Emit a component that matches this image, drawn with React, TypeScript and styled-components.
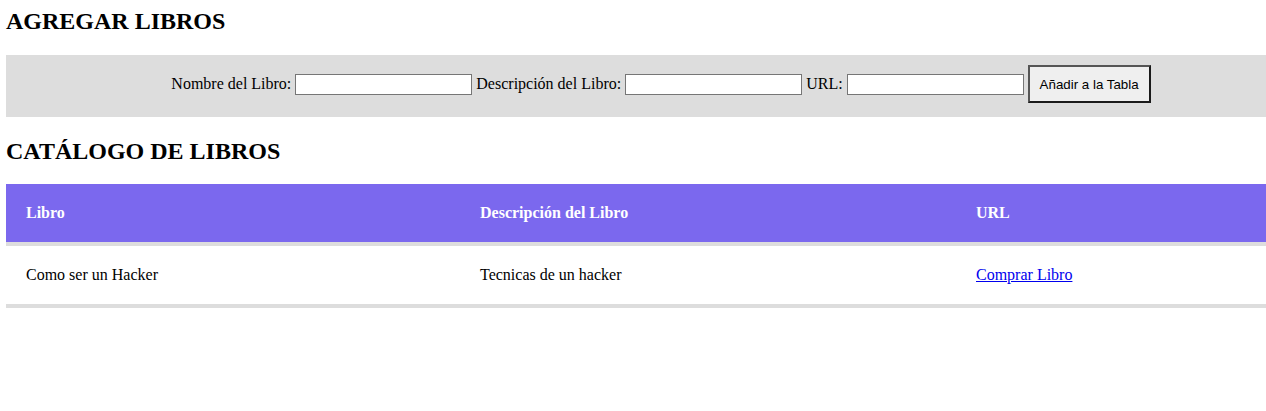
import styled, { createGlobalStyle } from 'styled-components';

const GlobalStyle = createGlobalStyle`
  html, body {
    margin: 0;
    padding: 0;
    background: #ffffff;
  }

  body {
    font-family: "Liberation Serif", "Times New Roman", serif;
    font-size: 16px;
    color: #000000;
  }
`;

const Page = styled.main`
  padding: 7px 0 0 6px;
`;

const Title = styled.h2`
  margin: 0 0 20px;
  font-size: 24px;
  font-weight: bold;
  line-height: 28px;
`;

const SecondTitle = styled(Title)`
  margin-top: 20px;
  margin-bottom: 19px;
`;

const AddForm = styled.form`
  display: flex;
  align-items: center;
  justify-content: center;
  gap: 4px;
  padding: 10px 0 14px 50px;
  background: #dddddd;
`;

const Label = styled.label`
  white-space: nowrap;
`;

const TextInput = styled.input`
  box-sizing: border-box;
  width: 177px;
  height: 21px;
  padding: 1px 2px;
  border: 1px solid #767676;
  background: #ffffff;
  font-family: "Liberation Sans", Arial, sans-serif;
  font-size: 13.33px;
`;

const AddButton = styled.button`
  box-sizing: border-box;
  height: 38px;
  padding: 0 10px;
  border: 2px solid;
  border-color: #555555 #1a1a1a #1a1a1a #555555;
  background: #efefef;
  color: #000000;
  font-family: "Liberation Sans", Arial, sans-serif;
  font-size: 13.33px;
`;

const Table = styled.table`
  width: 100%;
  border-collapse: collapse;
  table-layout: fixed;
`;

const Column = styled.col<{ $width: string }>`
  width: ${({ $width }) => $width};
`;

const HeadRow = styled.tr`
  background: #7b68ee;
  border-bottom: 4px solid #dddddd;
`;

const BodyRow = styled.tr`
  border-bottom: 4px solid #dddddd;
`;

const HeadCell = styled.th`
  padding: 20px;
  line-height: 18px;
  text-align: left;
  color: #ffffff;
  font-weight: bold;
`;

const Cell = styled.td`
  padding: 20px;
  line-height: 18px;
  text-align: left;
`;

const BuyLink = styled.a`
  color: #0000ee;
  text-decoration: underline;
`;

const books = [
  { name: 'Como ser un Hacker', description: 'Tecnicas de un hacker', url: '#' },
];

export default function App() {
  return (
    <>
      <GlobalStyle />
      <Page>
        <Title>AGREGAR LIBROS</Title>
        <AddForm onSubmit={(e) => e.preventDefault()}>
          <Label htmlFor="nombre">Nombre del Libro:</Label>
          <TextInput id="nombre" type="text" />
          <Label htmlFor="descripcion">Descripción del Libro:</Label>
          <TextInput id="descripcion" type="text" />
          <Label htmlFor="url">URL:</Label>
          <TextInput id="url" type="text" />
          <AddButton type="submit">Añadir a la Tabla</AddButton>
        </AddForm>

        <SecondTitle>CATÁLOGO DE LIBROS</SecondTitle>
        <Table>
          <colgroup>
            <Column $width="454px" />
            <Column $width="496px" />
            <Column $width="auto" />
          </colgroup>
          <thead>
            <HeadRow>
              <HeadCell>Libro</HeadCell>
              <HeadCell>Descripción del Libro</HeadCell>
              <HeadCell>URL</HeadCell>
            </HeadRow>
          </thead>
          <tbody>
            {books.map((book) => (
              <BodyRow key={book.name}>
                <Cell>{book.name}</Cell>
                <Cell>{book.description}</Cell>
                <Cell>
                  <BuyLink href={book.url}>Comprar Libro</BuyLink>
                </Cell>
              </BodyRow>
            ))}
          </tbody>
        </Table>
      </Page>
    </>
  );
}
